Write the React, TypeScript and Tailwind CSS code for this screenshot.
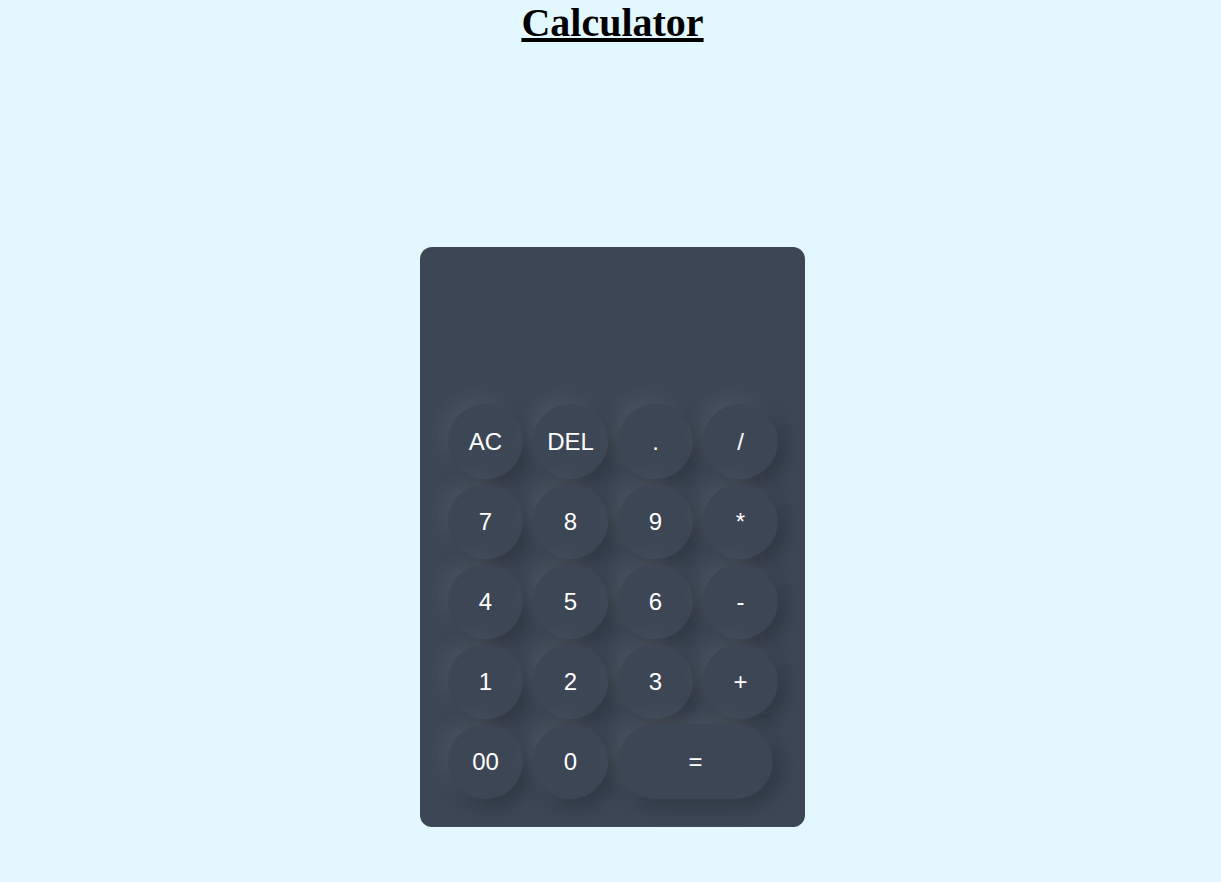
import React from "react";

const keys: { label: string; wide?: boolean }[] = [
  { label: "AC" }, { label: "DEL" }, { label: "." }, { label: "/" },
  { label: "7" }, { label: "8" }, { label: "9" }, { label: "*" },
  { label: "4" }, { label: "5" }, { label: "6" }, { label: "-" },
  { label: "1" }, { label: "2" }, { label: "3" }, { label: "+" },
  { label: "00" }, { label: "0" }, { label: "=", wide: true },
];

export default function App() {
  return (
    <div className="min-h-[882px] w-full bg-[#e3f7ff] flex flex-col items-center pl-[4px]">
      <h1
        className="m-0 text-[40px] leading-[46px] font-bold underline text-black"
        style={{ fontFamily: '"Liberation Serif", "Times New Roman", serif' }}
      >
        Calculator
      </h1>
      <div className="mt-[201px] w-[385px] h-[580px] rounded-[12px] bg-[#3c4655] flex flex-col pl-[28px] pr-[27px] pb-[28px]">
        <div className="h-[157px]"></div>
        <div
          className="grid grid-cols-[repeat(4,75px)] gap-x-[10px] gap-y-[5px]"
          style={{ fontFamily: '"Liberation Sans", Arial, sans-serif' }}
        >
          {keys.map((k) => (
            <button
              key={k.label}
              className={`${k.wide ? "col-span-2 w-[155px]" : "w-[75px]"} h-[75px] rounded-full bg-[#3c4655] text-white text-[24px] flex items-center justify-center shadow-[-5px_-5px_20px_rgba(255,255,255,0.1),5px_5px_20px_rgba(0,0,0,0.3)]`}
            >
              {k.label}
            </button>
          ))}
        </div>
      </div>
    </div>
  );
}
